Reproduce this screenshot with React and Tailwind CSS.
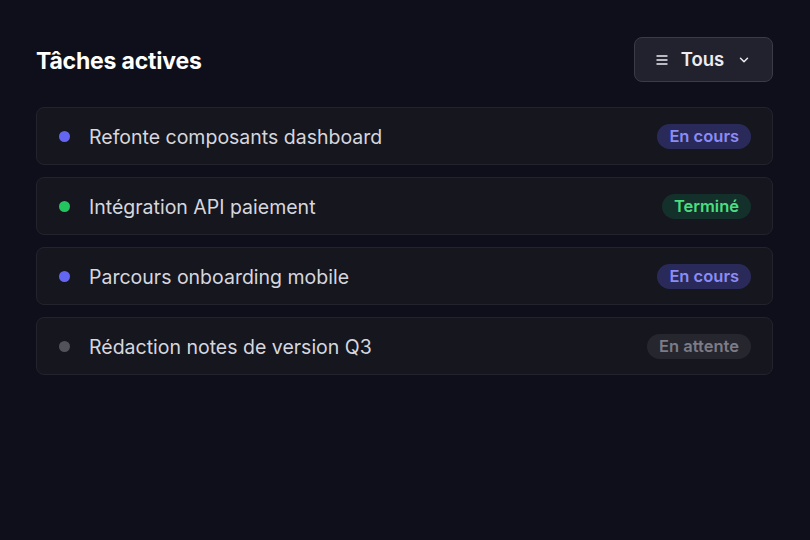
import { ChevronDown } from 'lucide-react';

const tasks = [
    { id: 1, name: 'Refonte composants dashboard', status: 'En cours' },
    { id: 2, name: 'Intégration API paiement', status: 'Terminé' },
    { id: 3, name: 'Parcours onboarding mobile', status: 'En cours' },
    { id: 4, name: 'Rédaction notes de version Q3', status: 'En attente' },
];

const statusStyles = {
    'En cours': { dot: 'bg-[#6366f1]', badge: 'bg-[#2a2a5a] text-[#8b8cf5]' },
    'Terminé': { dot: 'bg-[#22c55e]', badge: 'bg-[#14302a] text-[#4ade80]' },
    'En attente': { dot: 'bg-[#52525b]', badge: 'bg-[#26262f] text-[#7c7c86]' },
};

const MenuIcon = () => (
    <svg width="12" height="12" viewBox="0 0 12 12" fill="none" stroke="currentColor" strokeWidth="1.4" strokeLinecap="round">
        <path d="M1 2h10M1 6h10M1 10h10" />
    </svg>
);

const TaskRow = ({ task }) => {
    const s = statusStyles[task.status];
    return (
        <div className="flex items-center h-[58px] pl-[22px] pr-[21px] bg-[#16161f] border border-[#23232d] rounded-lg">
            <span className={`w-[11px] h-[11px] rounded-full ${s.dot}`} />
            <span className="ml-[19px] pt-[3px] text-[19.5px] text-[#d6d6de]">{task.name}</span>
            <span className={`ml-auto px-[12px] pt-[1px] h-[25px] flex items-center rounded-full text-[16.5px] font-semibold ${s.badge}`}>
                {task.status}
            </span>
        </div>
    );
};

export default function App() {
    return (
        <div className="w-[810px] h-[540px] bg-[#0f0f1b] px-[36px] pt-[37px]" style={{ fontFamily: 'Inter, "Noto Sans", sans-serif' }}>
            <div className="flex items-center justify-between">
                <h1 className="text-[23px] pt-[3px] font-bold text-white tracking-[-0.2px]">Tâches actives</h1>
                <button className="flex items-center h-[45px] w-[139px] justify-center gap-[13px] bg-[#22222e] border border-[#3a3a48] rounded-lg text-[#ececf2] mr-[1px]">
                    <MenuIcon />
                    <span className="text-[18.5px] font-semibold">Tous</span>
                    <ChevronDown className="w-[14px] h-[14px]" strokeWidth={2.5} />
                </button>
            </div>
            <div className="mt-[25px] flex flex-col gap-[12px] mr-[1px]">
                {tasks.map(task => (
                    <TaskRow key={task.id} task={task} />
                ))}
            </div>
        </div>
    );
}
